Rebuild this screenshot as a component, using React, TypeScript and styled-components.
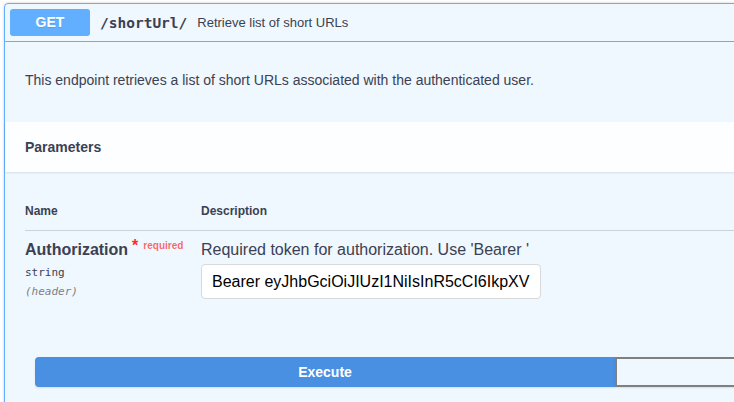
import React from "react";
import styled, { createGlobalStyle } from "styled-components";

const Global = createGlobalStyle`
  html, body { margin: 0; padding: 0; overflow: hidden; background: #fff; }
  body { font-family: "Liberation Sans", Arial, sans-serif; color: #3b4151; }
  * { box-sizing: border-box; }
`;

const Page = styled.div`
  padding: 3px 0 0 4px;
`;

const OpBlock = styled.div`
  width: 1222px;
  border: 1px solid #61affe;
  border-radius: 4px;
  background: rgba(97, 175, 254, 0.1);
  box-shadow: 0 0 3px rgba(0, 0, 0, 0.19);
`;

const Summary = styled.div`
  display: flex;
  align-items: center;
  padding: 5px;
  border-bottom: 1px solid #61affe;
`;

const Method = styled.span`
  min-width: 80px;
  padding: 6px 0;
  border-radius: 3px;
  background: #61affe;
  color: #fff;
  font-size: 14px;
  line-height: 15px;
  font-weight: 700;
  text-align: center;
  text-shadow: 0 1px 0 rgba(0, 0, 0, 0.1);
`;

const Path = styled.span`
  padding: 0 10px;
  font-family: "DejaVu Sans Mono", monospace;
  font-size: 14.5px;
  font-weight: 700;
  color: #3b4151;
`;

const SummaryText = styled.span`
  font-size: 13px;
  color: #3b4151;
`;

const Description = styled.div`
  padding: 30px 20px 34px;
  font-size: 14px;
  line-height: 16px;
`;

const SectionHeader = styled.div`
  display: flex;
  align-items: center;
  min-height: 50px;
  padding: 8px 20px;
  background: rgba(255, 255, 255, 0.8);
  box-shadow: 0 1px 2px rgba(0, 0, 0, 0.1);
`;

const SectionTitle = styled.h4`
  margin: 0;
  font-size: 14px;
  font-weight: 700;
  color: #3b4151;
`;

const TableContainer = styled.div`
  padding: 20px 20px 0;
`;

const Row = styled.div<{ $head?: boolean }>`
  display: grid;
  grid-template-columns: 176px 1fr;
  ${(p) => (p.$head ? "border-bottom: 1px solid rgba(59, 65, 81, 0.2);" : "")}
`;

const Th = styled.div`
  padding: 12px 0;
  font-size: 12px;
  line-height: 14px;
  font-weight: 700;
  color: #3b4151;
`;

const Td = styled.div`
  padding: 10px 10px 10px 0;
`;

const ParamName = styled.div`
  font-size: 16px;
  line-height: 18px;
  font-weight: 700;
  color: #3b4151;
  white-space: nowrap;
`;

const Star = styled.span`
  position: relative;
  top: -4px;
  padding-left: 4px;
  font-size: 16px;
  color: #ff2a2a;
`;

const RequiredTag = styled.span`
  position: relative;
  top: -6px;
  padding: 5px;
  font-size: 10px;
  font-weight: 700;
  color: rgba(255, 0, 0, 0.6);
`;

const ParamType = styled.div`
  padding: 5px 0 0;
  font-family: "DejaVu Sans Mono", monospace;
  font-size: 11px;
  line-height: 14px;
  color: #3b4151;
`;

const ParamIn = styled.div`
  padding-top: 5px;
  font-family: "DejaVu Sans Mono", monospace;
  font-size: 11px;
  line-height: 14px;
  font-style: italic;
  color: #808080;
`;

const ParamDesc = styled.div`
  font-size: 16px;
  line-height: 18px;
  color: #3b4151;
`;

const Input = styled.input`
  display: block;
  width: 340px;
  margin: 5px 0;
  padding: 8px 10px;
  border: 1px solid #d9d9d9;
  border-radius: 4px;
  background: #fff;
  font-family: "Liberation Sans", Arial, sans-serif;
  font-size: 16px;
  line-height: 17px;
  color: #000;
  outline: none;
`;

const BtnGroup = styled.div`
  display: flex;
  padding: 43px 30px 30px;
`;

const Btn = styled.button<{ $primary?: boolean }>`
  flex: 1;
  min-height: 30px;
  padding: 5px 23px;
  border: 2px solid ${(p) => (p.$primary ? "#4990e2" : "#808080")};
  border-radius: ${(p) => (p.$primary ? "4px 0 0 4px" : "0 4px 4px 0")};
  background: ${(p) => (p.$primary ? "#4990e2" : "transparent")};
  color: ${(p) => (p.$primary ? "#fff" : "#3b4151")};
  font-family: "Liberation Sans", Arial, sans-serif;
  font-size: 14px;
  line-height: 16px;
  font-weight: 700;
  box-shadow: 0 1px 2px rgba(0, 0, 0, 0.1);
`;

export default function App() {
  return (
    <Page>
      <Global />
      <OpBlock>
        <Summary>
          <Method>GET</Method>
          <Path>/shortUrl/</Path>
          <SummaryText>Retrieve list of short URLs</SummaryText>
        </Summary>
        <Description>
          This endpoint retrieves a list of short URLs associated with the authenticated user.
        </Description>
        <SectionHeader>
          <SectionTitle>Parameters</SectionTitle>
        </SectionHeader>
        <TableContainer>
          <Row $head>
            <Th>Name</Th>
            <Th>Description</Th>
          </Row>
          <Row>
            <Td>
              <ParamName>
                Authorization
                <Star>*</Star>
                <RequiredTag>required</RequiredTag>
              </ParamName>
              <ParamType>string</ParamType>
              <ParamIn>(header)</ParamIn>
            </Td>
            <Td>
              <ParamDesc>Required token for authorization. Use 'Bearer '</ParamDesc>
              <Input
                type="text"
                readOnly
                value="Bearer eyJhbGciOiJIUzI1NiIsInR5cCI6IkpXVCJ9.eyJzdWIiOiIxMjM0NTY3ODkwIn0"
              />
            </Td>
          </Row>
        </TableContainer>
        <BtnGroup>
          <Btn $primary>Execute</Btn>
          <Btn aria-label="Clear" />
        </BtnGroup>
      </OpBlock>
    </Page>
  );
}
